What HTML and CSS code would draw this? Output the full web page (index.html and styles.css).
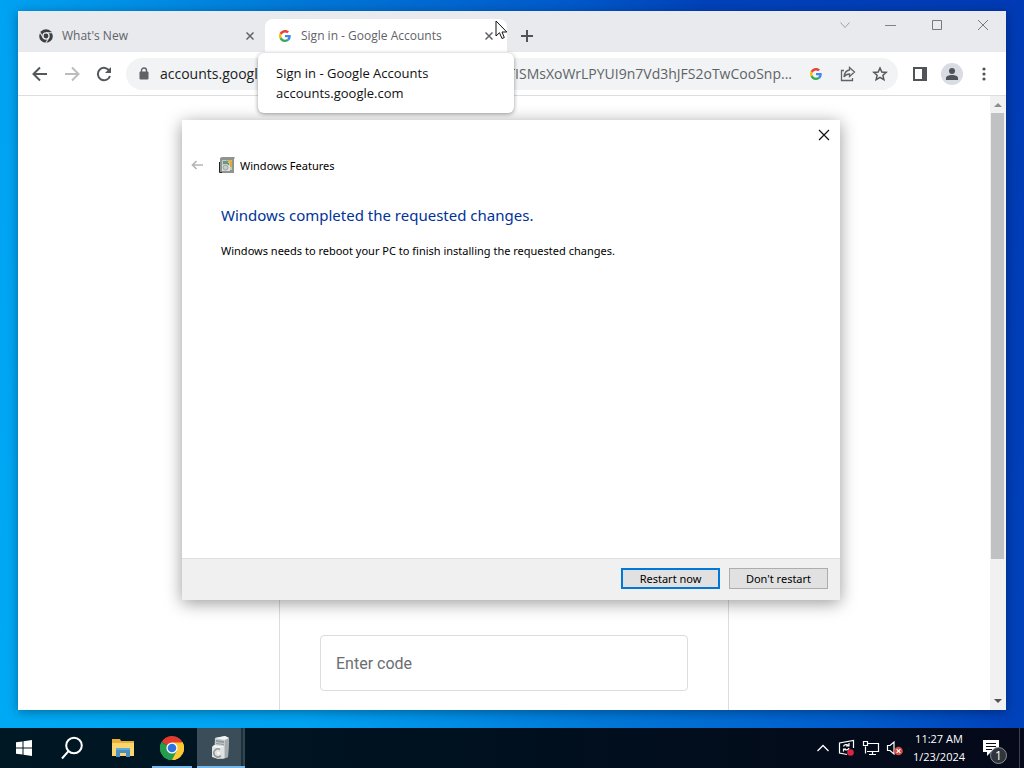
FILE: index.html
```
<!DOCTYPE html>
<html lang="en">
<head>
  <meta charset="UTF-8">
  <meta name="viewport" content="width=device-width, initial-scale=1.0">
  <title>Desktop</title>
  <link rel="stylesheet" href="styles.css">
</head>
<body>
  <!-- shared icons -->
  <svg class="defs" aria-hidden="true">
    <symbol id="google" viewBox="0 0 48 48">
      <path fill="#ea4335" d="M24 9.5c3.5 0 6.700 1.200 9.200 3.600l6.900-6.900C35.900 2.400 30.500 0 24 0 14.600 0 6.500 5.400 2.600 13.200l8 6.200C12.400 13.700 17.700 9.500 24 9.500z"/>
      <path fill="#4285f4" d="M47 24.500c0-1.600-.2-3.100-.4-4.500H24v9h12.900c-.6 3-2.300 5.500-4.800 7.200l7.700 6C44.400 38 47 31.800 47 24.500z"/>
      <path fill="#fbbc05" d="M10.500 28.600c-.5-1.500-.8-3-.8-4.600s.3-3.100.8-4.600l-8-6.200C.9 16.500 0 20.100 0 24s.9 7.500 2.600 10.800l7.900-6.200z"/>
      <path fill="#34a853" d="M24 48c6.500 0 11.900-2.100 15.900-5.800l-7.700-6c-2.200 1.500-4.900 2.300-8.200 2.300-6.300 0-11.600-4.200-13.500-9.900l-8 6.200C6.500 42.600 14.600 48 24 48z"/>
    </symbol>
    <symbol id="close" viewBox="0 0 8 8">
      <path d="M.5.500l7 7M7.500.500l-7 7" fill="none" stroke="currentColor" stroke-width="1.500"/>
    </symbol>
  </svg>

  <div class="desktop">
    <div class="workspace">

      <section class="browser">
        <header class="tab-strip">
          <div class="tab">
            <svg class="favicon" viewBox="0 0 16 16">
              <circle cx="8" cy="8" r="7.800" fill="#3c4043"/>
              <path d="M8 4.300h7M4.800 9.900L1.300 3.900M11.200 9.900l-3.500 6" stroke="#e8eaed" stroke-width="1.200"/>
              <circle cx="8" cy="8" r="3.500" fill="#3c4043" stroke="#e8eaed" stroke-width="1.500"/>
            </svg>
            <span class="tab-title">What's New</span>
            <button class="tab-close" aria-label="Close tab"><svg width="8" height="8"><use href="#close"/></svg></button>
          </div>
          <div class="tab active">
            <svg class="favicon google"><use href="#google"/></svg>
            <span class="tab-title">Sign in - Google Accounts</span>
            <button class="tab-close" aria-label="Close tab"><svg width="8" height="8"><use href="#close"/></svg></button>
          </div>
          <button class="new-tab" aria-label="New tab">
            <svg width="12" height="12" viewBox="0 0 12 12"><path d="M6 0v12M0 6h12" stroke="#505357" stroke-width="2"/></svg>
          </button>
          <div class="window-controls">
            <button aria-label="Search tabs"><svg width="12" height="12" viewBox="0 0 12 12"><path d="M1.500 3.500L6 8.500l4.500-5" fill="none" stroke="#a0a2a5"/></svg></button>
            <button aria-label="Minimize"><svg width="12" height="12" viewBox="0 0 12 12"><path d="M0 6.500h11" stroke="#808285"/></svg></button>
            <button aria-label="Maximize"><svg width="12" height="12" viewBox="0 0 12 12"><path d="M1.500 1.500h9v9h-9z" fill="none" stroke="#77797c"/></svg></button>
            <button aria-label="Close"><svg width="12" height="12" viewBox="0 0 12 12"><path d="M1 1l10 10M11 1L1 11" stroke="#77797c"/></svg></button>
          </div>
        </header>

        <div class="toolbar">
          <button class="tool" aria-label="Back">
            <svg width="16" height="16" viewBox="0 0 16 16"><path d="M15 8H2M8 1.500L1.500 8 8 14.500" fill="none" stroke="#54575b" stroke-width="2"/></svg>
          </button>
          <button class="tool" aria-label="Forward" disabled>
            <svg width="16" height="16" viewBox="0 0 16 16"><path d="M1 8h13M8 1.500L14.500 8 8 14.500" fill="none" stroke="#babcbe" stroke-width="2"/></svg>
          </button>
          <button class="tool" aria-label="Reload">
            <svg width="16" height="16" viewBox="0 0 16 16"><path d="M13.500 5A6.200 6.200 0 1 0 14 10" fill="none" stroke="#54575b" stroke-width="2"/><path d="M15 1v6H9z" fill="#54575b"/></svg>
          </button>
          <div class="omnibox">
            <svg class="lock" width="10" height="13" viewBox="0 0 10 13"><path d="M2.500 5V3.500a2.500 2.500 0 0 1 5 0V5" fill="none" stroke="#5f6368" stroke-width="1.400"/><rect x="0.500" y="4.500" width="9" height="8" rx="1" fill="#5f6368"/></svg>
            <input class="address" type="text" aria-label="Address" value="accounts.google.com">
            <span class="address-rest">YTISMsXoWrLPYUI9n7Vd3hJFS2oTwCooSnp...</span>
            <button class="tool" aria-label="Search with Google"><svg width="12" height="12"><use href="#google"/></svg></button>
            <button class="tool" aria-label="Share">
              <svg width="16" height="16" viewBox="0 0 16 16"><path d="M4 4.500H1.500v10h11V12M9.500 1.500l5 4.500-5 4.500V8C7 8 5.300 9 4 11c.3-4 2.500-6.500 5.500-7z" fill="none" stroke="#5f6368" stroke-width="1.300"/></svg>
            </button>
            <button class="tool" aria-label="Bookmark">
              <svg width="16" height="16" viewBox="0 0 16 16"><path d="M8 2l1.800 4 4.400.4-3.300 2.900 1 4.300L8 11.300l-3.900 2.300 1-4.300-3.300-2.900L6.200 6z" fill="none" stroke="#54575b" stroke-width="1.500"/></svg>
            </button>
          </div>
          <div class="toolbar-end">
            <button class="tool" aria-label="Side panel">
              <svg width="14" height="14" viewBox="0 0 14 14"><path d="M1 1h12v12H1z" fill="none" stroke="#505357" stroke-width="2"/><path d="M9 1h4v12H9z" fill="#505357"/></svg>
            </button>
            <button class="tool" aria-label="Profile">
              <svg width="22" height="22" viewBox="0 0 22 22"><circle cx="11" cy="11" r="11" fill="#dadce3"/><circle cx="11" cy="8" r="3" fill="#505357"/><path d="M5 17v-2c0-2 3-3 6-3s6 1 6 3v2z" fill="#505357"/></svg>
            </button>
            <button class="tool" aria-label="Menu">
              <svg width="4" height="14" viewBox="0 0 4 14" fill="#505357"><circle cx="2" cy="2" r="1.600"/><circle cx="2" cy="7" r="1.600"/><circle cx="2" cy="12" r="1.600"/></svg>
            </button>
          </div>
        </div>

        <div class="viewport">
          <main class="page">
            <form class="card">
              <input class="code" type="text" placeholder="Enter code" aria-label="Enter code">
            </form>
          </main>
          <div class="scrollbar">
            <span class="arrow up"></span>
            <span class="thumb"></span>
            <span class="track"></span>
            <span class="arrow down"></span>
          </div>
        </div>
      </section>

      <section class="dialog" role="dialog" aria-labelledby="dialog-title">
        <div class="dialog-top">
          <button aria-label="Close dialog"><svg width="12" height="12" viewBox="0 0 12 12"><path d="M1 1l10 10M11 1L1 11" stroke="#111" stroke-width="1.200"/></svg></button>
        </div>
        <div class="dialog-head">
          <button aria-label="Back" disabled><svg width="12" height="10" viewBox="0 0 12 10"><path d="M12 5H1.500M5.500 1l-4 4 4 4" fill="none" stroke="#b5b5b5" stroke-width="1.700"/></svg></button>
          <svg width="16" height="16" viewBox="0 0 16 16">
            <path d="M1 1l2-1h12l1 1-1 1v14H1z" fill="#8f948e"/>
            <path d="M.5 5v10.500H3" fill="none" stroke="#222"/>
            <path d="M3 3h10v10H3z" fill="#b9cfc4"/>
            <path d="M7 3h6v2H7z" fill="#e2b34c"/>
            <path d="M11 5h2v5h-2z" fill="#e4a53c"/>
            <path d="M4 4h5v3H4z" fill="#66968d"/>
            <path d="M8 6h2v3H8z" fill="#4f9a62"/>
            <path d="M3 8l5-1 3 2v5H3z" fill="#dfe2dd"/>
            <circle cx="6.500" cy="10.500" r="2.500" fill="#c9cdc9" stroke="#9ba09c"/>
          </svg>
          <span id="dialog-title">Windows Features</span>
        </div>
        <div class="dialog-body">
          <h1>Windows completed the requested changes.</h1>
          <p>Windows needs to reboot your PC to finish installing the requested changes.</p>
        </div>
        <footer class="dialog-footer">
          <button class="btn primary">Restart now</button>
          <button class="btn">Don't restart</button>
        </footer>
      </section>

      <div class="tooltip" role="tooltip">
        <strong>Sign in - Google Accounts</strong>
        <span>accounts.google.com</span>
      </div>

      <svg class="cursor" width="13" height="20" viewBox="0 0 13 20"><path d="M1 1v15l3.500-3.300L7 18.500l2.300-1L7 12h4.800z" fill="#fff" stroke="#111"/></svg>
    </div>

    <nav class="taskbar">
      <button class="task" aria-label="Start">
        <svg width="16" height="16" viewBox="0 0 16 16" fill="#fff"><path d="M0 2.300L6.500 1.400v6.100H0zM7.500 1.200L16 0v7.500H7.500zM0 8.500h6.500v6.100L0 13.700zM7.500 8.500H16V16l-8.500-1.200z"/></svg>
      </button>
      <button class="task" aria-label="Search">
        <svg width="24" height="24" viewBox="0 0 24 24" fill="none" stroke="#fff" stroke-width="2"><circle cx="14" cy="9.500" r="7.800"/><path d="M8.500 15.200L2 22.500"/></svg>
      </button>
      <button class="task folder" aria-label="File Explorer">
        <svg width="22" height="20" viewBox="0 0 22 20"><path d="M0 1h8l1 2h13v15H0z" fill="#e9af36"/><path d="M0 5h22v13H0z" fill="#fbd66f"/><path d="M4 10h14v9h-4v-4H8v4H4z" fill="#4690c5"/><path d="M4 10h14v2H4z" fill="#63a9d6"/></svg>
      </button>
      <button class="task open" aria-label="Google Chrome">
        <svg width="24" height="24" viewBox="0 0 24 24">
          <path d="M12 12L1.600 6A12 12 0 0 1 22.400 6z" fill="#e33b2e"/>
          <path d="M12 12L22.400 6A12 12 0 0 1 12 24z" fill="#fcc934"/>
          <path d="M12 12v12A12 12 0 0 1 1.600 6z" fill="#259b4d"/>
          <path d="M12 6.500h10.700A12 12 0 0 1 12 24l4.800-9.200z" fill="#fcc934"/>
          <path d="M1.600 6l5.600 8.800L12 17.500l4.800-2.700L12 24A12 12 0 0 1 1.600 6z" fill="#259b4d"/>
          <circle cx="12" cy="12" r="5.600" fill="#fff"/>
          <circle cx="12" cy="12" r="4.300" fill="#2f73e2"/>
        </svg>
      </button>
      <button class="task open current" aria-label="Windows Features">
        <svg width="20" height="24" viewBox="0 0 20 24">
          <path d="M4 2l10-2 4 2-1 19-5 2-9-2z" fill="#c5cacc"/>
          <path d="M4 2l10-2 4 2-4 2z" fill="#f2f4f4"/>
          <path d="M14 4l4-2-1 19-3 1z" fill="#a3abae"/>
          <path d="M5 4l8 1v2L5 6zM5 7l8 1v1L5 8z" fill="#8d999e"/>
          <path d="M1 11l6-1 6 1v11l-6 1-6-2z" fill="#dfe2e2"/>
          <path d="M1 11l2-2 9 1 1 1-6 1z" fill="#f4f5f5"/>
          <path d="M9 13.500a4 4 0 1 0 1 6" fill="none" stroke="#8e989b" stroke-width="1.500"/>
          <circle cx="7.500" cy="17" r="1.500" fill="#f6f7f7"/>
        </svg>
      </button>

      <div class="tray">
        <button aria-label="Show hidden icons"><svg width="12" height="8" viewBox="0 0 12 8"><path d="M.5 7L6 1.500 11.500 7" fill="none" stroke="#fff" stroke-width="1.300"/></svg></button>
        <button aria-label="Updates"><svg width="18" height="18" viewBox="0 0 18 18" fill="none" stroke="#fff" stroke-width="1.200"><path d="M9 15.500L1.500 14V4L15.500 1.500V9"/><path d="M5.500 7.500c.5-2 3.500-2.500 5-1M11 4v3H8M11 9c-.5 2-3.500 2.500-5 1M5.500 12.500V10H8"/><circle cx="12.500" cy="13.500" r="3.300" fill="#df2344" stroke="none"/></svg></button>
        <button aria-label="Network"><svg width="18" height="16" viewBox="0 0 18 16" fill="none" stroke="#fff" stroke-width="1.200"><path d="M6 3.500h10.500v8H5M3.500 6.500v7M10.500 11.500v3M7 14.500h7M1.500 1.500h4v4h-4z"/></svg></button>
        <button aria-label="Volume muted"><svg width="18" height="16" viewBox="0 0 18 16"><path d="M1.500 5.500H4L8 2v12l-4-3.500H1.500z" fill="none" stroke="#fff" stroke-width="1.200"/><circle cx="12.500" cy="11" r="4.300" fill="#d94b43"/><path d="M10.700 9.200l3.600 3.600M14.300 9.200l-3.600 3.600" stroke="#fff" stroke-width="1.200"/></svg></button>
        <div class="clock"><time>11:27 AM</time><time>1/23/2024</time></div>
        <button class="notifications" aria-label="Notifications">
          <svg width="16" height="16" viewBox="0 0 16 16"><path d="M0 0h16v12h-8l-4 4v-4H0z" fill="#fff"/><path d="M3 3.500h10M3 6.500h10M3 9.500h6" stroke="#060b18"/></svg>
          <span class="badge">1</span>
        </button>
        <button class="show-desktop" aria-label="Show desktop"></button>
      </div>
    </nav>
  </div>
</body>
</html>
```
FILE: styles.css
```
* {
  box-sizing: border-box;
}

body {
  margin: 0;
  font-family: "Open Sans", "Noto Sans", sans-serif;
  font-size: 12px;
  color: #111;
}

button {
  display: flex;
  align-items: center;
  justify-content: center;
  padding: 0;
  border: none;
  background: none;
  color: inherit;
  font: inherit;
}

svg {
  display: block;
  flex-shrink: 0;
}

.defs {
  position: absolute;
  width: 0;
  height: 0;
}

.desktop {
  display: flex;
  flex-direction: column;
  height: 100vh;
  overflow: hidden;
  background: linear-gradient(67deg, #00aaf4 0%, #00a2f2 24%, #0078d8 46%, #005ccc 65%, #0042ba 76%, #003ab4 100%);
}

.workspace {
  position: relative;
  flex: 1;
}

/* Browser window */
.browser {
  position: absolute;
  inset: 11px 18px 18px;
  display: flex;
  flex-direction: column;
  background: #fff;
  box-shadow: 0 2px 10px rgba(0, 0, 0, 0.35);
}

.tab-strip {
  display: flex;
  align-items: flex-end;
  height: 41px;
  padding-left: 13px;
  background: #e8eaed;
}

.tab {
  display: flex;
  align-items: center;
  width: 234px;
  height: 33px;
  padding: 0 9px 0 8px;
  color: #5f6368;
}

.tab.active {
  width: 242px;
  padding: 0 12px 0 14px;
  border-radius: 8px 8px 0 0;
  background: #fff;
}

.favicon {
  width: 14px;
  height: 14px;
  margin-right: 9px;
}

.favicon.google {
  width: 12px;
  height: 12px;
  margin-right: 10px;
}

.tab-title {
  flex: 1;
  white-space: nowrap;
}

.tab-close {
  width: 12px;
  height: 16px;
}

.new-tab {
  width: 40px;
  height: 33px;
}

.window-controls {
  display: flex;
  align-self: flex-start;
  margin-left: auto;
}

.window-controls button {
  width: 46px;
  height: 28px;
}

.toolbar {
  display: flex;
  align-items: center;
  height: 44px;
  padding: 0 6px;
  border-bottom: 1px solid #dcdee0;
}

.tool {
  width: 32px;
  height: 32px;
}

.omnibox {
  display: flex;
  flex: 1;
  align-items: center;
  height: 32px;
  margin: 0 6px;
  padding: 0 2px 0 13px;
  border-radius: 16px;
  background: #f1f3f4;
  font-size: 14px;
}

.lock {
  margin-right: 11px;
}

.address {
  flex: 1;
  min-width: 0;
  padding: 0;
  border: none;
  outline: none;
  background: none;
  color: #202124;
  font: inherit;
}

.address-rest {
  margin-right: 8px;
  color: #5f6368;
}

.toolbar-end {
  display: flex;
}

.viewport {
  display: flex;
  flex: 1;
  min-height: 0;
}

.page {
  display: flex;
  flex: 1;
  align-items: flex-end;
  justify-content: center;
}

.card {
  width: 450px;
  padding: 240px 40px 19px;
  border: solid #dadce0;
  border-width: 1px 1px 0;
}

.code {
  display: block;
  width: 100%;
  height: 56px;
  padding: 0 15px;
  border: 1px solid #dadce0;
  border-radius: 4px;
  font-family: Roboto, sans-serif;
  font-size: 16px;
}

.code::placeholder {
  color: #6b6e72;
}

.scrollbar {
  display: flex;
  flex-direction: column;
  width: 16px;
  background: #f1f1f1;
}

.arrow {
  align-self: center;
  width: 8px;
  height: 0;
  border: 4px solid transparent;
}

.arrow.up {
  margin: 3px 0 6px;
  border-bottom-color: #8b8d90;
}

.arrow.down {
  margin: 5px 0 3px;
  border-top-color: #505357;
}

.thumb {
  flex: 447;
  margin: 0 2px 0 1px;
  background: #bfc1c2;
}

.track {
  flex: 135;
}

/* Tab preview */
.tooltip {
  position: absolute;
  top: 53px;
  left: 258px;
  display: flex;
  flex-direction: column;
  width: 256px;
  padding: 10px 18px;
  border-radius: 6px;
  background: #fff;
  box-shadow: 0 1px 4px rgba(0, 0, 0, 0.4);
  font-size: 13px;
  line-height: 20px;
}

.tooltip strong {
  font-weight: 500;
}

.cursor {
  position: absolute;
  top: 20px;
  left: 495px;
}

/* Dialog */
.dialog {
  position: absolute;
  inset: 120px 184px 128px 182px;
  display: flex;
  flex-direction: column;
  background: #fff;
  box-shadow: 0 3px 16px rgba(0, 0, 0, 0.4);
  color: #000;
  font-family: "Noto Sans", sans-serif;
  font-size: 11px;
}

.dialog-top {
  display: flex;
  justify-content: flex-end;
}

.dialog-top button {
  width: 32px;
  height: 30px;
}

.dialog-head {
  display: flex;
  align-items: center;
  gap: 5px;
  height: 30px;
  padding: 0 9px;
}

.dialog-head button {
  width: 12px;
  margin-right: 11px;
}

.dialog-body {
  flex: 1;
  padding: 23px 39px;
}

.dialog h1 {
  margin: 0 0 14px;
  color: #003399;
  font-size: 15px;
  font-weight: 400;
  line-height: 24px;
}

.dialog p {
  margin: 0;
  line-height: 20px;
}

.dialog-footer {
  display: flex;
  justify-content: flex-end;
  gap: 9px;
  padding: 9px 12px 11px;
  border-top: 1px solid #dfdfdf;
  background: #f0f0f0;
}

.btn {
  width: 99px;
  height: 21px;
  border: 1px solid #adadad;
  background: #e1e1e1;
}

.btn.primary {
  border: 2px solid #0078d7;
}

/* Taskbar */
.taskbar {
  display: flex;
  height: 40px;
  background: linear-gradient(90deg, #001824, #00101f 50%, #050919);
  color: #fff;
}

.task {
  width: 48px;
}

.task.folder {
  padding-left: 5px;
}

.task.open {
  width: 40px;
  margin: 0 5px 0 8px;
  box-shadow: inset 0 -2px #76b9ed;
}

.task.current {
  width: 48px;
  margin: 0;
  background: linear-gradient(90deg, #3a4d58 44px, #1c303b 44px, #1c303b 46px, #33454f 46px);
}

.tray {
  display: flex;
  margin-left: auto;
}

.tray button {
  width: 24px;
}

.clock {
  display: flex;
  flex-direction: column;
  align-items: center;
  justify-content: center;
  width: 64px;
  font-size: 11px;
  line-height: 18px;
}

.tray .notifications {
  position: relative;
  width: 48px;
  padding-right: 8px;
}

.tray .show-desktop {
  width: 5px;
  border-left: 1px solid #3c4250;
}

.badge {
  position: absolute;
  top: 19px;
  right: 12px;
  width: 17px;
  height: 17px;
  border: 1px solid #8b8f96;
  border-radius: 50%;
  background: #30343b;
  line-height: 15px;
}
```
